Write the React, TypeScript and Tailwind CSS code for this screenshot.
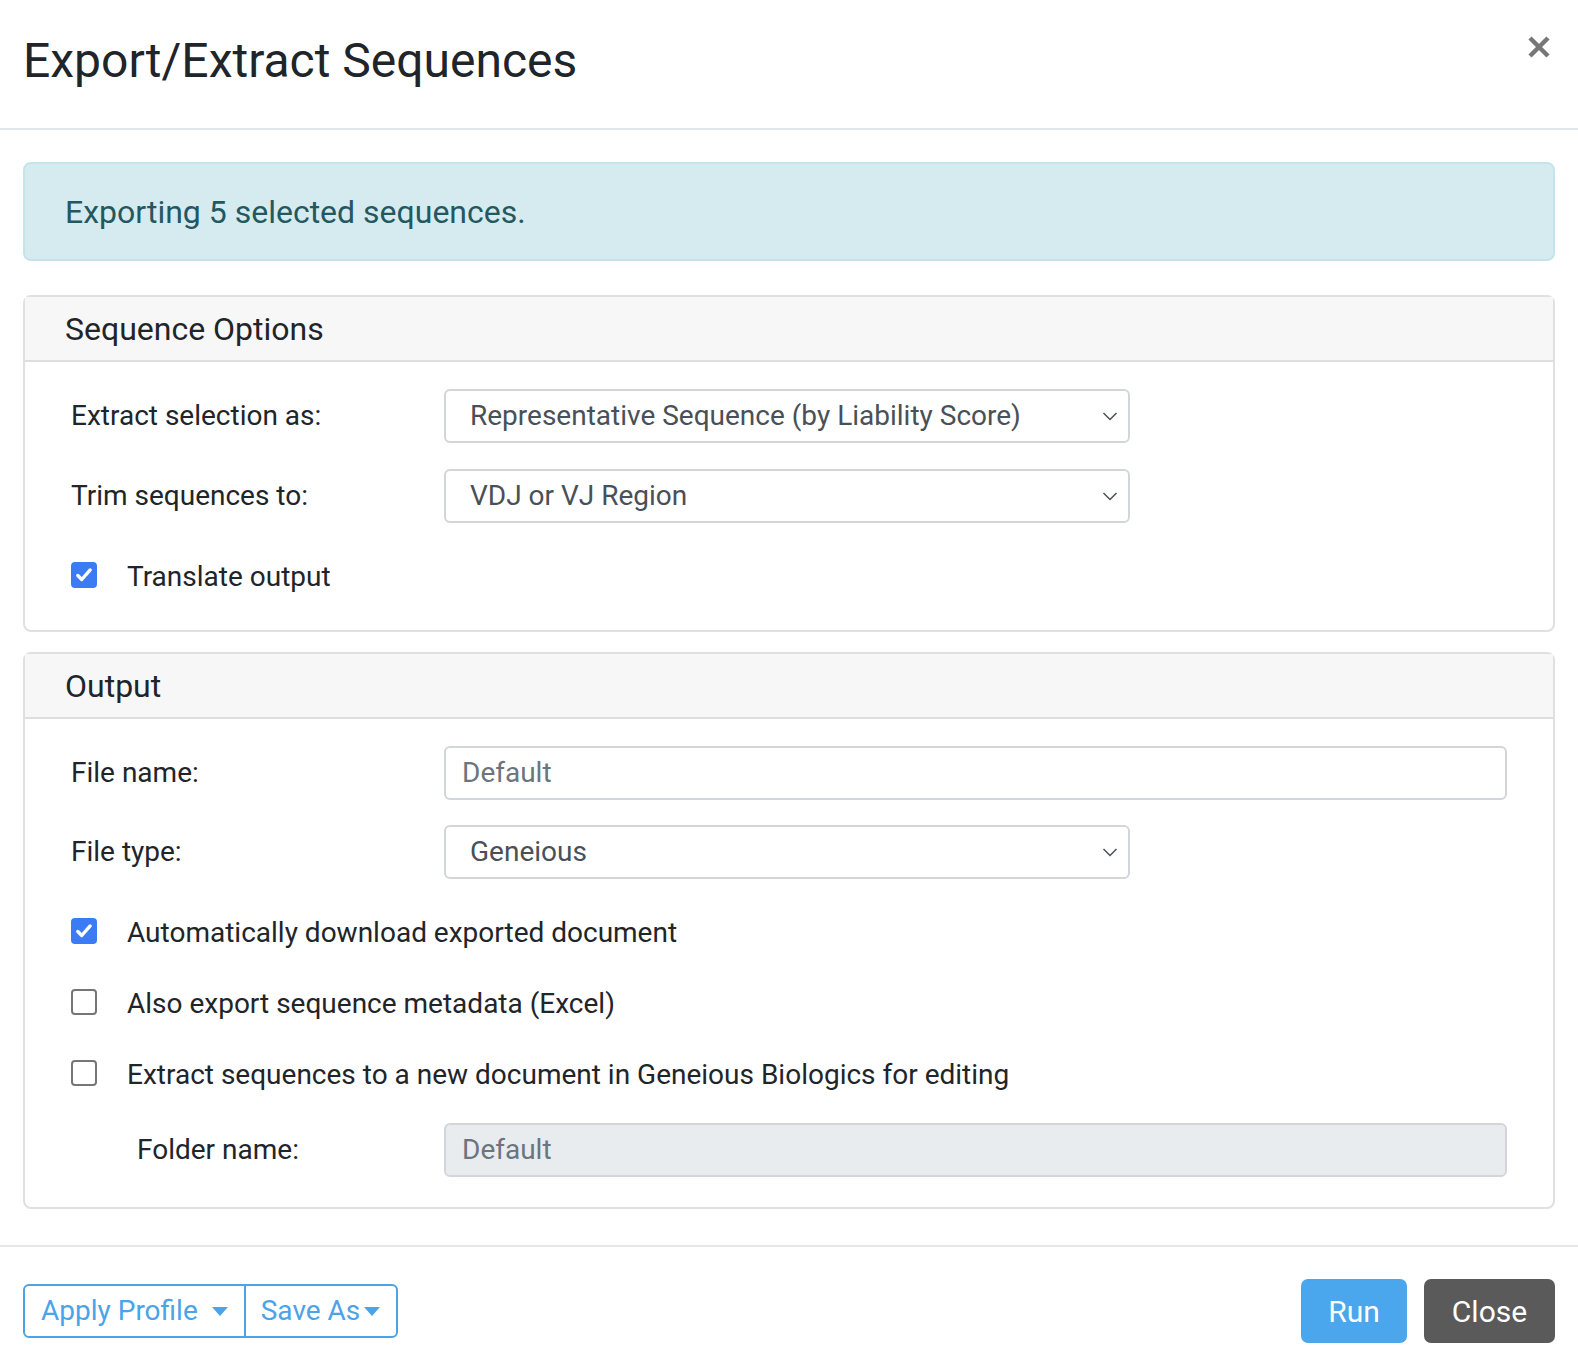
import React from 'react';

const Check = ({ checked }: { checked: boolean }) => (
  <span
    className={`flex h-[26px] w-[26px] shrink-0 items-center justify-center rounded-[4px] ${
      checked ? 'bg-[#3b7cf4]' : 'border-2 border-[#767676] bg-white'
    }`}
  >
    {checked && (
      <svg width="18" height="18" viewBox="0 0 16 16">
        <path d="M2.5 8.5l3.5 3.5 7.5-8.5" fill="none" stroke="#fff" strokeWidth="3" strokeLinecap="round" strokeLinejoin="round" />
      </svg>
    )}
  </span>
);

const Select = ({ value }: { value: string }) => (
  <div className="flex h-[54px] w-[686px] items-center justify-between rounded-[6px] border-2 border-[#d2d6da] bg-white pl-[24px] pr-[10px] text-[28px] text-[#495057]">
    <span>{value}</span>
    <svg width="16" height="10" viewBox="0 0 16 10">
      <path d="M1.5 2l6.5 6.5L14.5 2" fill="none" stroke="#495057" strokeWidth="1.5" />
    </svg>
  </div>
);

const Row = ({ label, children, indent = false }: { label: string; children: React.ReactNode; indent?: boolean }) => (
  <div className="flex items-center">
    <div className={`w-[373px] shrink-0 text-[28px] text-[#212529] ${indent ? 'pl-[66px]' : ''}`}>{label}</div>
    {children}
  </div>
);

const CheckRow = ({ checked, label }: { checked: boolean; label: string }) => (
  <div className="flex h-[30px] items-center gap-[30px] text-[28px] text-[#212529]">
    <Check checked={checked} />
    <span className="pt-[4px]">{label}</span>
  </div>
);

const Caret = () => (
  <svg width="16" height="9" viewBox="0 0 16 9">
    <path d="M0 0h16L8 9z" fill="#4ba3e8" />
  </svg>
);

export default function App() {
  return (
    <div className="h-[1368px] w-[1578px] bg-white font-['Roboto',sans-serif] text-[#212529]">
      {/* Header */}
      <div className="flex h-[130px] items-start justify-between border-b-2 border-[#e4e7ea] pl-[23px] pr-[28px] pt-[29px]">
        <h1 className="text-[48px] leading-[64px] font-normal">Export/Extract Sequences</h1>
        <svg className="mt-[7px]" width="22" height="22" viewBox="0 0 22 22">
          <path d="M2 2l18 18M20 2L2 20" stroke="#777" strokeWidth="4.5" />
        </svg>
      </div>

      {/* Body */}
      <div className="flex flex-col px-[23px] pt-[32px]">
        <div className="flex h-[99px] items-center rounded-[8px] border-2 border-[#c4e4ec] bg-[#d6ebf0] pl-[40px] text-[32px] text-[#24585f]">
          Exporting 5 selected sequences.
        </div>

        <div className="mt-[34px] rounded-[8px] border-2 border-[#e0e0e0]">
          <div className="flex h-[65px] items-center border-b-2 border-[#dedede] bg-[#f7f7f7] pl-[40px] text-[32px]">
            Sequence Options
          </div>
          <div className="flex flex-col pb-[40px] pl-[46px] pt-[27px]">
            <Row label="Extract selection as:">
              <Select value="Representative Sequence (by Liability Score)" />
            </Row>
            <div className="mt-[26px]">
              <Row label="Trim sequences to:">
                <Select value="VDJ or VJ Region" />
              </Row>
            </div>
            <div className="mt-[37px]">
              <CheckRow checked label="Translate output" />
            </div>
          </div>
        </div>

        <div className="mt-[20px] rounded-[8px] border-2 border-[#e0e0e0]">
          <div className="flex h-[65px] items-center border-b-2 border-[#dedede] bg-[#f7f7f7] pl-[40px] text-[32px]">
            Output
          </div>
          <div className="flex flex-col pb-[30px] pl-[46px] pr-[46px] pt-[27px]">
            <Row label="File name:">
              <div className="flex h-[54px] flex-1 items-center rounded-[6px] border-2 border-[#d2d6da] bg-white pl-[16px] text-[28px] text-[#6c757d]">
                Default
              </div>
            </Row>
            <div className="mt-[25px]">
              <Row label="File type:">
                <Select value="Geneious" />
              </Row>
            </div>
            <div className="mt-[37px] flex flex-col gap-[41px]">
              <CheckRow checked label="Automatically download exported document" />
              <CheckRow checked={false} label="Also export sequence metadata (Excel)" />
              <CheckRow checked={false} label="Extract sequences to a new document in Geneious Biologics for editing" />
            </div>
            <div className="mt-[35px]">
              <Row label="Folder name:" indent>
                <div className="flex h-[54px] flex-1 items-center rounded-[6px] border-2 border-[#d2d6da] bg-[#e9ecef] pl-[16px] text-[28px] text-[#6c757d]">
                  Default
                </div>
              </Row>
            </div>
          </div>
        </div>
      </div>

      {/* Footer */}
      <div className="mt-[36px] flex items-center justify-between border-t-2 border-[#e4e7ea] px-[23px] pt-[32px]">
        <div className="flex h-[54px] rounded-[6px] border-2 border-[#4ba3e8] text-[28px] text-[#4ba3e8]">
          <div className="flex items-center gap-[14px] border-r-2 border-[#4ba3e8] pl-[16px] pr-[16px]">
            <span>Apply Profile</span>
            <Caret />
          </div>
          <div className="flex items-center gap-[4px] pl-[15px] pr-[16px]">
            <span>Save As</span>
            <Caret />
          </div>
        </div>
        <div className="flex gap-[17px]">
          <div className="flex h-[64px] w-[106px] items-center justify-center rounded-[7px] bg-[#4aa6ed] text-[30px] text-white">
            Run
          </div>
          <div className="flex h-[64px] w-[131px] items-center justify-center rounded-[7px] bg-[#5a5a5b] text-[30px] text-white">
            Close
          </div>
        </div>
      </div>
    </div>
  );
}
